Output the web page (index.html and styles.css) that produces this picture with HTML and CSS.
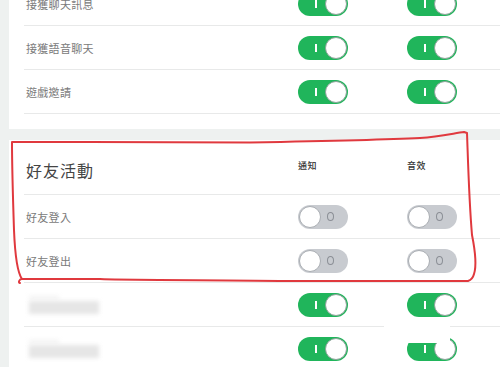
FILE: index.html
```html
<!DOCTYPE html>
<html lang="zh-Hant">
<head>
<meta charset="utf-8">
<link rel="stylesheet" href="styles.css">
</head>
<body>
<div class="page">
  <section class="card card-top">
    <div class="row"><span class="label">接獲聊天訊息</span><span class="toggle on"><i class="mark"></i><i class="knob"></i></span><span class="toggle on"><i class="mark"></i><i class="knob"></i></span></div>
    <div class="row"><span class="label">接獲語音聊天</span><span class="toggle on"><i class="mark"></i><i class="knob"></i></span><span class="toggle on"><i class="mark"></i><i class="knob"></i></span></div>
    <div class="row"><span class="label">遊戲邀請</span><span class="toggle on"><i class="mark"></i><i class="knob"></i></span><span class="toggle on"><i class="mark"></i><i class="knob"></i></span></div>
  </section>
  <section class="card">
    <div class="row head"><span class="title">好友活動</span><span class="col">通知</span><span class="col">音效</span></div>
    <div class="row"><span class="label">好友登入</span><span class="toggle off"><i class="knob"></i><i class="mark"></i></span><span class="toggle off"><i class="knob"></i><i class="mark"></i></span></div>
    <div class="row"><span class="label">好友登出</span><span class="toggle off"><i class="knob"></i><i class="mark"></i></span><span class="toggle off"><i class="knob"></i><i class="mark"></i></span></div>
    <div class="row"><span class="blur"><i class="blur-small"></i><i class="blur-bar"></i></span><span class="toggle on"><i class="mark"></i><i class="knob"></i></span><span class="toggle on"><i class="mark"></i><i class="knob"></i></span></div>
    <div class="row"><span class="blur"><i class="blur-small"></i><i class="blur-bar"></i></span><span class="toggle on"><i class="mark"></i><i class="knob"></i></span><span class="toggle on"><i class="mark"></i><i class="knob"></i></span></div>
  </section>
</div>
<div class="patch"></div>
<svg class="scribble" width="500" height="367" viewBox="0 0 500 367">
  <path d="M12,142 L90,142 L250,142.5 C330,141 380,140 420,138 C440,137 455,133 464,132 L467,133 C468,160 469,200 472,235 C476,255 476,268 474,274 C473,278 471,280 468,281 L300,281 C200,280 120,280 100,279 L22,279 C19,279 18,283 20,283 M22,279 C17,272 15,255 14,230 C13,200 12,170 12,142" />
</svg>
</body>
</html>
```

FILE: styles.css
```css
html, body {
  margin: 0;
  padding: 0;
}
body {
  width: 500px;
  height: 367px;
  overflow: hidden;
  background: #eef1f0;
  font-family: "Noto Sans CJK TC", "Noto Sans", sans-serif;
  position: relative;
}
.page {
  padding-left: 9px;
  display: flex;
  flex-direction: column;
  gap: 11px;
  margin-top: -18px;
}
.card {
  background: #ffffff;
}
.card-top {
  padding-bottom: 15px;
}
.row {
  margin-left: 15px;
  height: 44px;
  box-sizing: border-box;
  border-bottom: 1px solid #e8e9e9;
  display: grid;
  grid-template-columns: 274px 109px 1fr;
  align-items: center;
}
.row.head {
  height: 55px;
}
.label {
  padding-left: 2px;
  font-size: 11px;
  letter-spacing: 0.3px;
  color: #7a7a7a;
}
.title {
  padding-left: 2px;
  padding-top: 6px;
  font-size: 16px;
  letter-spacing: 1px;
  color: #444;
}
.col {
  font-size: 9px;
  color: #333;
  font-weight: 500;
  letter-spacing: 0.5px;
  padding-bottom: 3px;
}
.toggle {
  width: 50px;
  height: 24px;
  border-radius: 12px;
  box-sizing: border-box;
  padding: 1px;
  display: flex;
  align-items: center;
}
.toggle i {
  display: block;
}
.toggle.on {
  background: #20b55b;
}
.toggle.off {
  background: #c8cbd0;
}
.knob {
  width: 22px;
  height: 22px;
  border-radius: 50%;
  background: #fff;
  box-sizing: border-box;
  border: 1px solid #8fa39b;
}
.off .knob {
  border-color: #a9adb2;
}
.on .mark {
  width: 2px;
  height: 8px;
  background: #ffffff;
  margin-left: 16px;
  margin-right: auto;
}
.off .mark {
  width: 5px;
  height: 7px;
  border: 1.5px solid #8b8f96;
  border-radius: 50%;
  margin-left: auto;
  margin-right: 13px;
}
.blur {
  display: flex;
  flex-direction: column;
  gap: 2px;
  padding-left: 5px;
}
.blur i {
  display: block;
  filter: blur(2px);
}
.blur-small {
  width: 30px;
  height: 3px;
  background: #f0f0f0;
}
.blur-bar {
  width: 70px;
  height: 13px;
  background: #e6e6e6;
}
.patch {
  position: absolute;
  left: 384px;
  top: 322px;
  width: 66px;
  height: 21px;
  background: #ffffff;
}
.scribble {
  position: absolute;
  left: 0;
  top: 0;
  pointer-events: none;
}
.scribble path {
  fill: none;
  stroke: #e0393e;
  stroke-width: 2;
  stroke-linejoin: round;
  stroke-linecap: round;
}
```
